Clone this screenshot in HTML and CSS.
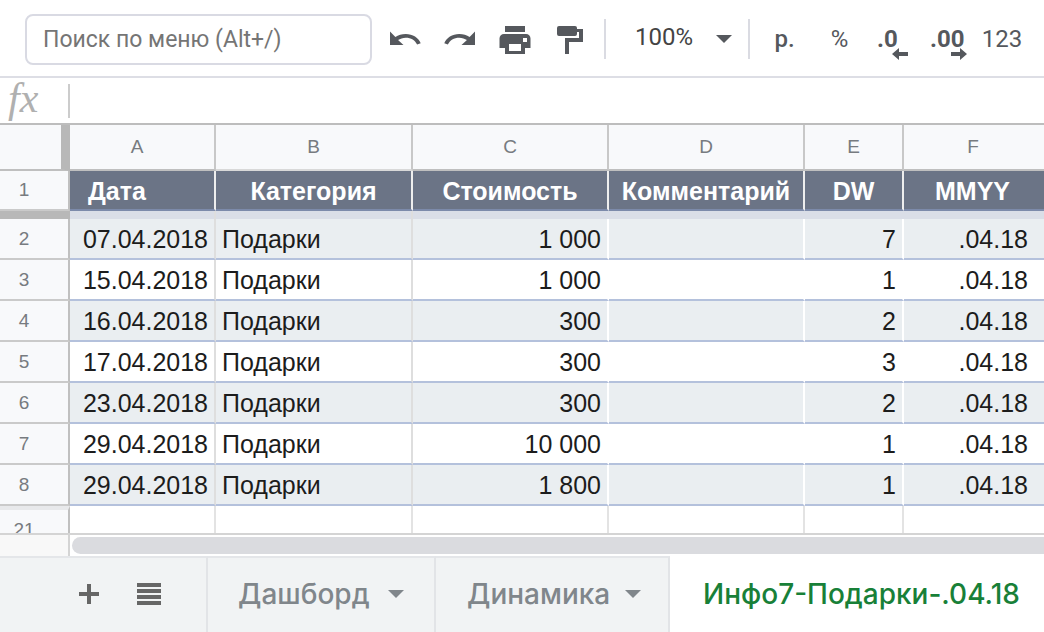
FILE: index.html
```html
<!DOCTYPE html>
<html lang="ru">
<head>
<meta charset="utf-8">
<title>Инфо7-Подарки-.04.18</title>
<link rel="stylesheet" href="styles.css">
</head>
<body>
<div class="app">
  <div class="toolbar">
    <input class="search" type="text" placeholder="Поиск по меню (Alt+/)" aria-label="Поиск по меню">
    <div class="tools">
      <button class="tool" type="button" aria-label="Отменить"><svg width="36" height="36" viewBox="0 0 24 24"><path d="M12.500 8.700c-2.650 0-5.050.700-6.900 2L2 7v9h9l-3.620-3.300c1.390-1 3.160-1.600 5.120-1.600 3.540 0 6.300 1.800 7.600 4.600l2.370-.9C21.080 11.300 17.150 8.700 12.500 8.700z"/></svg></button>
      <button class="tool" type="button" aria-label="Повторить"><svg width="36" height="36" viewBox="0 0 24 24"><path transform="matrix(-1 0 0 1 24 0)" d="M12.500 8.700c-2.650 0-5.050.700-6.900 2L2 7v9h9l-3.620-3.300c1.390-1 3.160-1.600 5.120-1.600 3.540 0 6.300 1.800 7.600 4.600l2.370-.9C21.080 11.300 17.150 8.700 12.500 8.700z"/></svg></button>
      <button class="tool" type="button" aria-label="Печать"><svg width="36" height="36" viewBox="0 0 36 36"><path fill-rule="evenodd" d="M8 5h20v6H8zM7 13h22a4.500 4.500 0 0 1 4.500 4.500v9.500H28v6H8v-6H2.500v-9.500A4.500 4.500 0 0 1 7 13zm5 10v7h12v-7zm14-6v4h4v-4z"/></svg></button>
      <button class="tool" type="button" aria-label="Копировать форматирование"><svg width="36" height="36" viewBox="0 0 36 36"><path d="M7 5h16q2 0 2 2v1h6v13H17v12h-4V17h14v-6h-2v2q0 2-2 2H7q-2 0-2-2V7q0-2 2-2z"/></svg></button>
    </div>
    <div class="zoom">
      <select class="zoom-select" aria-label="Масштаб"><option>100%</option></select>
      <svg class="caret" width="16" height="8" viewBox="0 0 16 8"><path d="M0 0h16L8 8z"/></svg>
    </div>
    <div class="formats">
      <button class="tool money" type="button">р.</button>
      <button class="tool" type="button">%</button>
      <button class="tool" type="button" aria-label="Уменьшить число знаков"><svg width="36" height="40" viewBox="0 0 36 40"><text class="decimal" x="0" y="28">.0</text><path d="M15 35l7-6v4h9v4h-9v4z"/></svg></button>
      <button class="tool" type="button" aria-label="Увеличить число знаков"><svg width="36" height="40" viewBox="0 0 36 40"><text class="decimal" x="-2" y="28">.00</text><path d="M35 35l-7-6v4h-9v4h9v4z"/></svg></button>
      <button class="tool number" type="button">123</button>
    </div>
  </div>
  <label class="formula"><span class="fx">fx</span><input class="formula-input" type="text" aria-label="Строка формул"></label>
  <div class="grid">
    <table class="sheet">
      <colgroup><col class="c-num"><col class="c-a"><col class="c-b"><col class="c-c"><col class="c-d"><col class="c-e"><col></colgroup>
      <thead><tr><th class="corner"></th><th class="head-a">A</th><th class="picked">B</th><th>C</th><th>D</th><th>E</th><th>F</th></tr></thead>
      <tbody>
        <tr class="title"><th>1</th><td class="first">Дата</td><td>Категория</td><td>Стоимость</td><td>Комментарий</td><td>DW</td><td>MMYY</td></tr>
        <tr class="freeze"><th></th><td></td><td></td><td></td><td></td><td></td><td></td></tr>
        <tr class="band"><th>2</th><td>07.04.2018</td><td>Подарки</td><td>1 000</td><td></td><td>7</td><td>.04.18</td></tr>
        <tr><th>3</th><td>15.04.2018</td><td>Подарки</td><td>1 000</td><td></td><td>1</td><td>.04.18</td></tr>
        <tr class="band"><th>4</th><td>16.04.2018</td><td>Подарки</td><td>300</td><td></td><td>2</td><td>.04.18</td></tr>
        <tr><th>5</th><td>17.04.2018</td><td>Подарки</td><td>300</td><td></td><td>3</td><td>.04.18</td></tr>
        <tr class="band"><th>6</th><td>23.04.2018</td><td>Подарки</td><td>300</td><td></td><td>2</td><td>.04.18</td></tr>
        <tr><th>7</th><td>29.04.2018</td><td>Подарки</td><td>10 000</td><td></td><td>1</td><td>.04.18</td></tr>
        <tr class="band"><th>8</th><td>29.04.2018</td><td>Подарки</td><td>1 800</td><td></td><td>1</td><td>.04.18</td></tr>
        <tr class="tail"><th>21</th><td></td><td></td><td></td><td></td><td></td><td></td></tr>
      </tbody>
    </table>
  </div>
  <div class="scroll"><div class="scroll-corner"></div><div class="track"><div class="thumb"></div></div></div>
  <div class="tabs">
    <div class="tab-tools">
      <button class="icon" type="button" aria-label="Добавить лист"><svg width="20" height="20" viewBox="0 0 20 20"><path d="M8 0h4v8h8v4h-8v8H8v-8H0V8h8z"/></svg></button>
      <button class="icon" type="button" aria-label="Все листы"><svg width="24" height="22" viewBox="0 0 24 22"><path d="M0 0h24v4H0zM0 6h24v4H0zM0 12h24v4H0zM0 18h24v4H0z"/></svg></button>
    </div>
    <button class="tab" type="button">Дашборд<svg width="16" height="8" viewBox="0 0 16 8"><path d="M0 0h16L8 8z"/></svg></button>
    <button class="tab" type="button">Динамика<svg width="16" height="8" viewBox="0 0 16 8"><path d="M0 0h16L8 8z"/></svg></button>
    <button class="tab active" type="button">Инфо7-Подарки-.04.18</button>
  </div>
</div>
</body>
</html>
```
FILE: styles.css
```css
* { box-sizing: border-box; }
body { margin: 0; background: #fff; font-family: Roboto, "Liberation Sans", sans-serif; overflow: hidden; }
button, input, select { font: inherit; color: inherit; border: 0; background: none; padding: 0; margin: 0; outline: 0; }
svg { display: block; fill: currentColor; overflow: visible; }
.app { display: flex; flex-direction: column; height: 100vh; }

.toolbar { display: flex; align-items: center; flex: none; height: 78px; padding: 2px 0 0 25px; border-bottom: 2px solid #dddee5; color: #55585d; font-size: 24px; }
.search { width: 347px; height: 51px; padding: 0 16px; border: 2px solid #d9dae3; border-radius: 8px; font-size: 23px; }
.search::placeholder { color: #757575; opacity: 1; }
.tools, .formats { display: flex; align-items: center; }
.tools { padding: 0 7px 0 5px; }
.tool { display: flex; align-items: center; justify-content: center; flex: none; width: 55px; height: 40px; }
.money { font-weight: 500; }
.number { width: 50px; }
.decimal { font: 700 24px Roboto, sans-serif; }
.zoom { display: flex; align-items: center; flex: none; width: 146px; height: 40px; padding-left: 29px; border-left: 2px solid #dadbe2; border-right: 2px solid #dadbe2; }
.zoom-select { appearance: none; width: 81px; height: 40px; padding-bottom: 4px; color: #444; }
.formats { padding-left: 7px; }

.formula { display: flex; align-items: center; flex: none; height: 47px; border-bottom: 2px solid #bdbdbd; }
.fx { width: 68px; padding: 0 0 6px 8px; color: #b0b0b0; font: italic 42px/40px "Liberation Serif", serif; }
.formula-input { flex: 1; height: 34px; padding: 0 8px; border-left: 2px solid #ccc; font-size: 24px; }

.grid { flex: 1; min-height: 0; overflow: hidden; border-bottom: 2px solid #d4d4d4; }
.sheet { width: 100%; table-layout: fixed; border-collapse: separate; border-spacing: 0; font-family: "Liberation Sans", Arial, sans-serif; font-size: 25px; color: #1c1c1c; }
.c-num { width: 70px; }
.c-a { width: 146px; }
.c-b { width: 197px; }
.c-c, .c-d { width: 196px; }
.c-e { width: 99px; }
.sheet th, .sheet td { padding: 0; white-space: nowrap; overflow: hidden; }
.sheet th { background: #f8f9fb; color: #777b80; font-size: 19px; font-weight: 400; }
.sheet thead th { height: 46px; border-right: 2px solid #c8c8c8; border-bottom: 2px solid #bfbfbf; }
.sheet thead .corner { border-right: 9px solid #b8b8b8; }
.sheet thead .head-a { padding-right: 10px; }
.sheet thead .picked { border-bottom-color: #d9d9d9; }
.sheet thead th:last-child { border-right: 0; padding-right: 2px; }
.sheet tbody th { padding-right: 20px; border-right: 2px solid #c0c0c0; border-bottom: 2px solid #cacaca; }
.sheet td { height: 41px; border-right: 2px solid #fff; border-bottom: 2px solid #b4c1dc; text-align: right; line-height: 28px; }
.sheet td:nth-child(2), .sheet td:nth-child(3) { border-right-color: #dedede; }
.sheet td:nth-child(2), .sheet td:nth-child(4), .sheet td:nth-child(6) { padding-right: 6px; }
.sheet td:nth-child(3) { padding-left: 6px; text-align: left; }
.sheet td:last-child { padding-right: 16px; border-right: 0; }
.band td { background: #eaeef1; }
.sheet .title td { height: 40px; padding: 2px 0 0; background: #6b7486; border-right-color: #eee; border-bottom-color: #7c8aaa; color: #fff; font-weight: 700; text-align: center; }
.sheet .title td:last-child { padding-right: 3px; }
.sheet .title td.first { padding-left: 18px; text-align: left; }
.sheet .freeze td { height: 8px; padding: 0; line-height: 0; border-bottom: 0; background: #dadee7; border-right-color: #dadee7; }
.sheet .freeze td:nth-child(2), .sheet .freeze td:nth-child(3) { border-right-color: #dedede; }
.sheet .freeze th { border: 0; background: #b8b8b8; }
.sheet .tail td { border-right-color: #e3e3e3; border-bottom: 0; }
.sheet .tail th { padding-top: 2px; border-top: 4px solid #e8e9eb; border-bottom: 0; }

.scroll { display: flex; flex: none; height: 21px; }
.scroll-corner { width: 70px; background: #f8f8f8; border-right: 2px solid #d4d4d4; }
.track { flex: 1; padding: 2px 0 2px 2px; }
.thumb { height: 17px; border-radius: 9px 0 0 9px; background: #dadbdf; }

.tabs { display: flex; flex: none; height: 76px; background: #f1f3f4; font-family: Inter, sans-serif; font-size: 28px; font-weight: 500; color: #80868b; }
.tab-tools { display: flex; align-items: center; gap: 38px; width: 208px; padding: 0 0 2px 79px; border-top: 2px solid #e4e6e9; border-right: 2px solid #e2e4e7; color: #666; }
.tab { display: flex; align-items: center; justify-content: space-between; flex: none; width: 228px; padding: 0 30px 2px 30px; border-top: 2px solid #e4e6e9; border-right: 2px solid #e2e4e7; }
.tab + .tab { width: 234px; padding-right: 27px; padding-left: 31px; }
.tab + .active { flex: 1; width: auto; padding: 0 0 0 33px; border: 0; background: #fff; color: #188038; white-space: nowrap; }
```
